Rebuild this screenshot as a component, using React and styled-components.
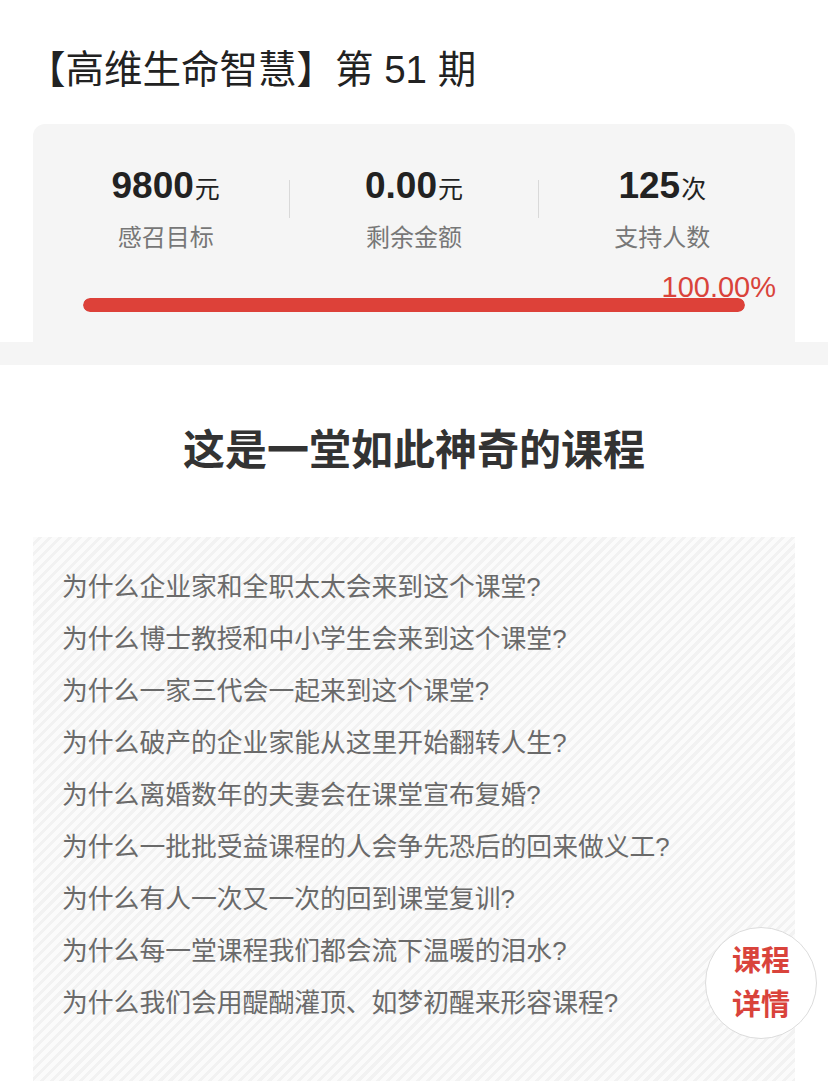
import React from "react";
import styled, { createGlobalStyle } from "styled-components";

const Global = createGlobalStyle`
  html, body { margin: 0; padding: 0; background: #ffffff; }
  body {
    font-family: "Liberation Sans", "Noto Sans CJK SC", sans-serif;
    -webkit-font-smoothing: antialiased;
  }
`;

const Page = styled.div`
  width: 828px;
  height: 1081px;
  overflow: hidden;
  position: relative;
`;

const Title = styled.h1`
  margin: 0;
  padding: 47px 0 0 27px;
  font-size: 38.5px;
  line-height: 46px;
  font-weight: 400;
  color: #222222;
  letter-spacing: 0;
`;

const Card = styled.section`
  margin: 31px 33px 0;
  background: #f5f5f5;
  border-radius: 12px 12px 0 0;
  padding: 40px 9px 30px;
`;

const Stats = styled.div`
  display: grid;
  grid-template-columns: 1fr 1px 1fr 1px 1fr;
  align-items: start;
`;

const Stat = styled.div`
  display: flex;
  flex-direction: column;
  align-items: center;
`;

const Divider = styled.div`
  width: 1px;
  height: 38px;
  margin-top: 16px;
  background: #d9d9d9;
`;

const Value = styled.div`
  font-size: 37px;
  line-height: 44px;
  font-weight: 700;
  color: #222222;
  display: flex;
  align-items: baseline;
`;

const Unit = styled.span`
  font-size: 25px;
  font-weight: 400;
  margin-left: 1px;
`;

const Label = styled.div`
  margin-top: 12px;
  font-size: 24px;
  line-height: 30px;
  color: #777777;
`;

const ProgressWrap = styled.div`
  position: relative;
  margin: 45px 41px 0;
`;

const Track = styled.div`
  height: 14px;
  border-radius: 7px;
  background: #e8e8e8;
  overflow: hidden;
`;

const Fill = styled.div`
  height: 100%;
  border-radius: 7px;
  background: #dd4139;
`;

const Percent = styled.span`
  position: absolute;
  right: -31px;
  top: -26px;
  font-size: 29px;
  line-height: 30px;
  color: #d9433b;
`;

const Band = styled.div`
  height: 23px;
  background: #f5f5f5;
`;

const Heading = styled.h2`
  margin: 61px 0 0;
  text-align: center;
  font-size: 42px;
  line-height: 50px;
  font-weight: 700;
  color: #333333;
`;

const Questions = styled.ul`
  list-style: none;
  margin: 61px 33px 0;
  padding: 24px 0 60px 29px;
  background-color: #fafafa;
  background-image: repeating-linear-gradient(
    135deg,
    #fbfbfb 0px,
    #fbfbfb 4px,
    #f2f2f2 4px,
    #f2f2f2 7px
  );
`;

const Question = styled.li`
  font-size: 25.8px;
  line-height: 52px;
  color: #6a6a6a;
  white-space: nowrap;
`;

const DetailButton = styled.button`
  position: absolute;
  left: 705px;
  top: 927px;
  width: 112px;
  height: 112px;
  border-radius: 50%;
  border: 1px solid #dcdcdc;
  background: #ffffff;
  padding: 0;
  display: flex;
  flex-direction: column;
  align-items: center;
  justify-content: center;
  font-family: "Liberation Sans", "Noto Sans CJK SC", sans-serif;
  font-size: 29px;
  line-height: 44px;
  font-weight: 700;
  color: #d9433b;
  cursor: pointer;
`;

const stats = [
  { value: "9800", unit: "元", label: "感召目标" },
  { value: "0.00", unit: "元", label: "剩余金额" },
  { value: "125", unit: "次", label: "支持人数" },
];

const questions = [
  "为什么企业家和全职太太会来到这个课堂?",
  "为什么博士教授和中小学生会来到这个课堂?",
  "为什么一家三代会一起来到这个课堂?",
  "为什么破产的企业家能从这里开始翻转人生?",
  "为什么离婚数年的夫妻会在课堂宣布复婚?",
  "为什么一批批受益课程的人会争先恐后的回来做义工?",
  "为什么有人一次又一次的回到课堂复训?",
  "为什么每一堂课程我们都会流下温暖的泪水?",
  "为什么我们会用醍醐灌顶、如梦初醒来形容课程?",
];

export default function App() {
  const progress = 100;
  return (
    <Page>
      <Global />
      <Title>【高维生命智慧】第 51 期</Title>
      <Card>
        <Stats>
          {stats.map((s, i) => (
            <React.Fragment key={s.label}>
              {i > 0 && <Divider />}
              <Stat>
                <Value>
                  {s.value}
                  <Unit>{s.unit}</Unit>
                </Value>
                <Label>{s.label}</Label>
              </Stat>
            </React.Fragment>
          ))}
        </Stats>
        <ProgressWrap>
          <Track>
            <Fill style={{ width: `${progress}%` }} />
          </Track>
          <Percent>{progress.toFixed(2)}%</Percent>
        </ProgressWrap>
      </Card>
      <Band />
      <Heading>这是一堂如此神奇的课程</Heading>
      <Questions>
        {questions.map((q) => (
          <Question key={q}>{q}</Question>
        ))}
      </Questions>
      <DetailButton>
        <span>课程</span>
        <span>详情</span>
      </DetailButton>
    </Page>
  );
}
